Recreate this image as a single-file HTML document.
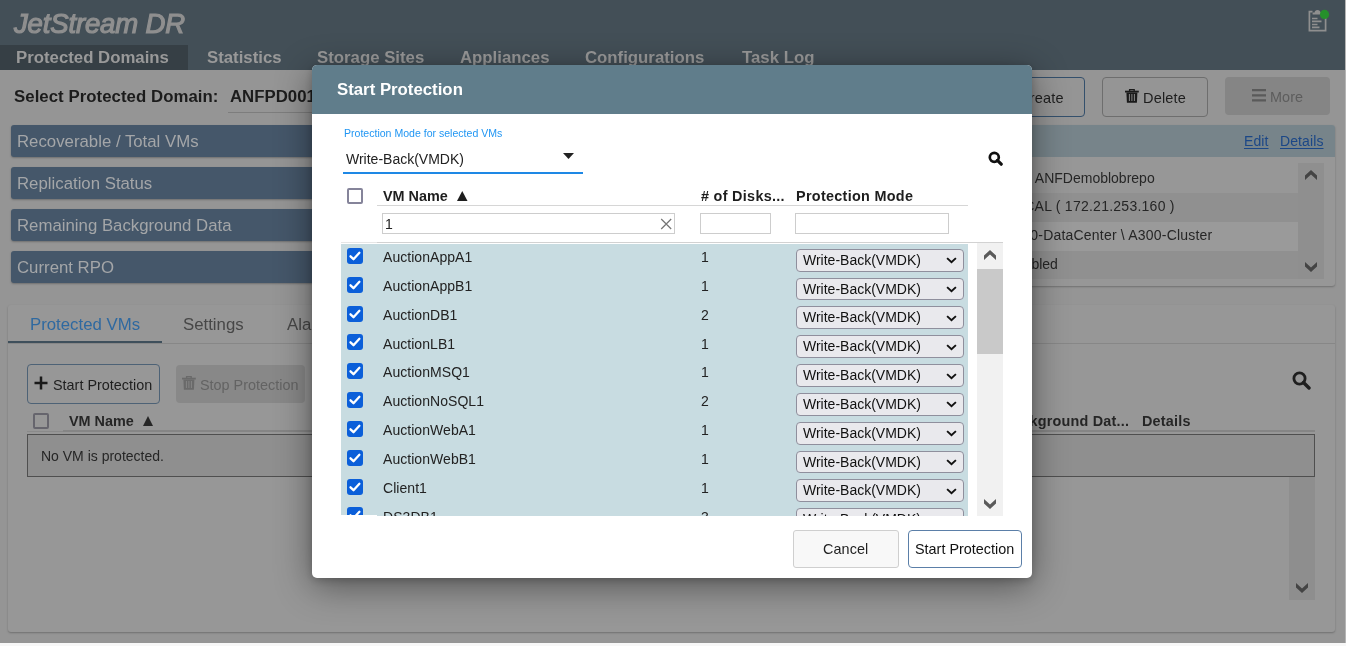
<!DOCTYPE html>
<html><head><meta charset="utf-8">
<style>
*{box-sizing:border-box;margin:0;padding:0}
html,body{width:1346px;height:646px;overflow:hidden;background:#f7f7f7;font-family:"Liberation Sans",sans-serif}
.a{position:absolute}
.t{position:absolute;white-space:nowrap;line-height:1;will-change:transform}
#page{position:absolute;left:0;top:0;width:1345px;height:643px;background:#959595;overflow:hidden}
#rstrip{position:absolute;left:1345px;top:0;width:1px;height:643px;background:#b5b5b5}
#hdr{left:0;top:0;width:1345px;height:70px;background:#434f57}
.nav{font-weight:bold;font-size:16.8px;color:#999}
.pnl{left:11px;width:650px;height:32px;background:#45576a;border-radius:3px;box-shadow:0 1px 2px rgba(0,0,0,.25)}
.pnl span{position:absolute;left:6px;top:9px;font-size:16.8px;color:#a4a6a8;line-height:1;white-space:nowrap;will-change:transform}
#modal{left:312px;top:65px;width:720px;height:513px;background:#fff;border-radius:5px;box-shadow:0 8px 36px rgba(0,0,0,.45), 0 2px 8px rgba(0,0,0,.2);overflow:hidden}
#mh{left:0;top:0;width:720px;height:49px;background:#607d8b}
.row{position:absolute;left:0;width:627px;height:28.8px}
.cb{position:absolute;left:6px;top:4px;width:16px;height:16px;background:#0b5fd9;border-radius:3px}
.cb svg{position:absolute;left:0;top:0}
.rn{position:absolute;left:42px;top:6.2px;font-size:14px;color:#222;line-height:1;white-space:nowrap;letter-spacing:0.05px}
.rd{position:absolute;left:360px;top:6.2px;font-size:14px;color:#222;line-height:1}
.sel{position:absolute;left:455px;top:4.8px;width:168px;height:22.8px;background:#e9e9ed;border:1px solid #8f8f9d;border-radius:4px}
.sel span{position:absolute;left:6px;top:3px;font-size:14px;color:#111;line-height:1;white-space:nowrap}
.sel svg{position:absolute;left:149px;top:7.6px}
.hb{font-size:14.4px;font-weight:bold;color:#1e1e1e;letter-spacing:0.25px}
</style></head><body>
<div id="page">
  <div id="hdr" class="a">
    <div class="t" style="left:14px;top:10px;font-size:27.5px;font-weight:normal;font-style:italic;color:#8f8f8f;-webkit-text-stroke:1.2px #8f8f8f;letter-spacing:-0.15px">JetStream DR</div>
    <div class="a" style="left:0;top:45px;width:188px;height:25px;background:#363f45"></div>
    <div class="t nav" style="left:16px;top:50px">Protected Domains</div>
    <div class="t nav" style="left:207px;top:50px">Statistics</div>
    <div class="t nav" style="left:317px;top:50px">Storage Sites</div>
    <div class="t nav" style="left:459.5px;top:50px">Appliances</div>
    <div class="t nav" style="left:585px;top:50px">Configurations</div>
    <div class="t nav" style="left:742px;top:50px">Task Log</div>
    <svg class="a" style="left:1306px;top:8px" width="24" height="26" viewBox="0 0 24 26">
      <path d="M6.5 3.6 H3.4 V22.6 H19.6 V3.6 H16.5" fill="none" stroke="#8f8f8f" stroke-width="1.7"/>
      <path d="M6.6 6.6 V4.6 H8.6 Q8.8 2 11.5 2 Q14.2 2 14.4 4.6 H16.4 V6.6 Z" fill="#8f8f8f"/>
      <path d="M6 10.5 H11.5 M6 13.4 H15.5 M6 16.5 H11.5 M6 19.4 H13.5" stroke="#8f8f8f" stroke-width="1.7"/>
      <circle cx="18.5" cy="6.4" r="4.6" fill="#26902b"/>
    </svg>
  </div>
  <div class="t" style="left:14px;top:89px;font-size:16.8px;font-weight:bold;color:#1c1c1c;letter-spacing:0.05px">Select Protected Domain:</div>
  <div class="t" style="left:229.5px;top:89px;font-size:16.8px;font-weight:bold;color:#1c1c1c">ANFPD001</div>
  <div class="a" style="left:228px;top:112px;width:90px;height:1px;background:#7d7d7d"></div>
  <div class="a pnl" style="top:125px"><span>Recoverable / Total VMs</span></div>
  <div class="a pnl" style="top:167px"><span>Replication Status</span></div>
  <div class="a pnl" style="top:209px"><span>Remaining Background Data</span></div>
  <div class="a pnl" style="top:251px"><span>Current RPO</span></div>

  <div class="a" style="left:985px;top:77px;width:100px;height:40px;border:1px solid #34506c;border-radius:4px"></div>
  <div class="t" style="left:1018.5px;top:91px;font-size:14.5px;color:#1e1e1e;letter-spacing:0.2px">Create</div>
  <div class="a" style="left:1102px;top:77px;width:106px;height:40px;border:1px solid #6e6e6e;border-radius:4px"></div>
  <div class="a" style="left:1125px;top:89px;line-height:0"><svg width="14" height="14" viewBox="0 0 14 14"><path d="M4.6 2 V0.7 H9.2 V2" stroke="#1a1a1a" stroke-width="1.3" fill="none"/><rect x="0" y="1.7" width="13.8" height="1.8" fill="#1a1a1a"/><path d="M1.4 3.4 H12.4 L11.9 13.8 H1.9 Z" fill="#1a1a1a"/><path d="M4.4 5 V12 M6.9 5 V12 M9.4 5 V12" stroke="#959595" stroke-width="0.9"/></svg></div>
  <div class="t" style="left:1143px;top:90.9px;font-size:14.5px;color:#1e1e1e;letter-spacing:0.2px">Delete</div>
  <div class="a" style="left:1225px;top:77px;width:105px;height:38px;background:#858585;border-radius:4px"></div>
  <svg class="a" style="left:1252px;top:89px" width="14" height="13" viewBox="0 0 14 13"><path d="M0 1.2 H14 M0 6.3 H14 M0 11.4 H14" stroke="#5a5a5a" stroke-width="2.2"/></svg>
  <div class="t" style="left:1269.5px;top:90.1px;font-size:14.4px;color:#5d5d5d;letter-spacing:0.1px">More</div>

  <div class="a" style="left:680px;top:125px;width:655px;height:161px;background:#979797;border-radius:3px;box-shadow:0 1px 2px rgba(0,0,0,.25);overflow:hidden">
    <div class="a" style="left:0;top:0;width:655px;height:32px;background:#77848a"></div>
    <div class="t" style="left:564px;top:9.1px;font-size:14px;color:#1b4787;text-decoration:underline;text-underline-offset:2px;letter-spacing:0.1px">Edit</div>
    <div class="t" style="left:599.5px;top:9.1px;font-size:14px;color:#1b4787;text-decoration:underline;text-underline-offset:2px;letter-spacing:0.1px">Details</div>
    <div class="a" style="left:0;top:38px;width:618px;height:30px;background:#979797"></div>
    <div class="a" style="left:0;top:68px;width:618px;height:29px;background:#909090"></div>
    <div class="a" style="left:0;top:97px;width:618px;height:29px;background:#9a9a9a"></div>
    <div class="a" style="left:0;top:126px;width:618px;height:28px;background:#909090"></div>
    <div class="a" style="left:618px;top:38px;width:26px;height:116px;background:#8f8f8f"></div>
    <div class="a" style="left:625px;top:45.2px;line-height:0"><svg width="12" height="10" viewBox="0 0 12 10"><path d="M0 5.5 L6 0 L12 5.5 L12 10 L6 4.5 L0 10 Z" fill="#444"/></svg></div>
    <div class="a" style="left:625px;top:136.9px;line-height:0"><svg width="12" height="10" viewBox="0 0 12 10"><path d="M0 0 L6 5.5 L12 0 L12 4.5 L6 10 L0 4.5 Z" fill="#444"/></svg></div>
    <div class="t" style="right:180px;top:46px;font-size:14px;color:#262626;text-align:right">Target Storage: ANFDemoblobrepo</div>
    <div class="t" style="right:160px;top:73.7px;font-size:14px;color:#262626;text-align:right;letter-spacing:0.25px">Appliance: LOCAL ( 172.21.253.160 )</div>
    <div class="t" style="right:122.9px;top:102.5px;font-size:14px;color:#262626;text-align:right;letter-spacing:0.2px">vCenter: A300-DataCenter \ A300-Cluster</div>
    <div class="t" style="right:277.4px;top:132px;font-size:14px;color:#262626;text-align:right">Status: Enabled</div>
  </div>

  <div class="a" style="left:8px;top:305px;width:1327px;height:327px;background:#979797;border-radius:3px;box-shadow:0 1px 2px rgba(0,0,0,.25)">
    <div class="a" style="left:0;top:38px;width:1327px;height:1px;background:#878787"></div>
    <div class="a" style="left:0;top:36px;width:154px;height:2px;background:#3e4f5b"></div>
    <div class="t" style="left:21.5px;top:12px;font-size:16.8px;color:#2f69a0">Protected VMs</div>
    <div class="t" style="left:175px;top:12px;font-size:16.8px;color:#474747">Settings</div>
    <div class="t" style="left:279px;top:12px;font-size:16.8px;color:#474747">Alarms</div>
    <div class="a" style="left:19px;top:59px;width:133px;height:40px;border:1px solid #4d6276;border-radius:4px"></div>
    <svg class="a" style="left:26px;top:71px" width="14" height="14" viewBox="0 0 14 14"><path d="M7 0.5 V13.5 M0.5 7 H13.5" stroke="#1a1a1a" stroke-width="2.5"/></svg>
    <div class="t" style="left:45px;top:73px;font-size:14.4px;color:#1e1e1e">Start Protection</div>
    <div class="a" style="left:168px;top:60px;width:129px;height:38px;background:#888;border-radius:4px"></div>
    <div class="a" style="left:174px;top:71px;line-height:0"><svg width="14" height="14" viewBox="0 0 14 14"><path d="M4.6 2 V0.7 H9.2 V2" stroke="#6a6a6a" stroke-width="1.3" fill="none"/><rect x="0" y="1.7" width="13.8" height="1.8" fill="#6a6a6a"/><path d="M1.4 3.4 H12.4 L11.9 13.8 H1.9 Z" fill="#6a6a6a"/><path d="M4.4 5 V12 M6.9 5 V12 M9.4 5 V12" stroke="#888" stroke-width="0.9"/></svg></div>
    <div class="t" style="left:192px;top:73px;font-size:14.4px;color:#636363">Stop Protection</div>
    <svg class="a" style="left:1284px;top:65.8px" width="19" height="19" viewBox="0 0 19 19"><circle cx="7.5" cy="7.5" r="5.6" stroke="#1f1f1f" stroke-width="2.8" fill="none"/><path d="M11.5 11.5 L17 17" stroke="#1f1f1f" stroke-width="3.4" stroke-linecap="round"/></svg>
    <div class="a" style="left:25px;top:108px;width:16px;height:16px;border:2px solid #66656d;border-radius:2px"></div>
    <div class="t hb" style="left:61px;top:108.5px;color:#262626;letter-spacing:0">VM Name</div>
    <svg class="a" style="left:135.2px;top:111px" width="10" height="10" viewBox="0 0 10 10"><path d="M5 0 L10 10 H0 Z" fill="#262626"/></svg>
    <div class="t hb" style="right:206px;top:109px;color:#262626;letter-spacing:0.2px;text-align:right">Remaining Background Dat...</div>
    <div class="t hb" style="left:1134px;top:109px;color:#262626;letter-spacing:0.2px">Details</div>
    <div class="a" style="left:19px;top:126px;width:36px;height:1px;background:#8a8a8a"></div><div class="a" style="left:55px;top:125px;width:1252px;height:2px;background:#858585"></div>
    <div class="a" style="left:19px;top:129px;width:1288px;height:43px;border:1px solid #4f4f4f;background:#8f8f8f"></div>
    <div class="t" style="left:32.5px;top:144px;font-size:14px;color:#262626">No VM is protected.</div>
    <div class="a" style="left:1281px;top:172px;width:26px;height:123px;background:#8e8e8e"></div>
    <div class="a" style="left:1288px;top:277.8px;line-height:0"><svg width="12" height="10" viewBox="0 0 12 10"><path d="M0 0 L6 5.5 L12 0 L12 4.5 L6 10 L0 4.5 Z" fill="#444"/></svg></div>
  </div>
</div>
<div id="rstrip"></div>

<div id="modal" class="a">
  <div id="mh" class="a">
    <div class="t" style="left:25px;top:17px;font-size:16.8px;font-weight:bold;color:#fff">Start Protection</div>
  </div>
  <div class="t" style="left:32px;top:62.7px;font-size:10.55px;color:#2196f3">Protection Mode for selected VMs</div>
  <div class="t" style="left:34px;top:86.5px;font-size:14px;color:#222">Write-Back(VMDK)</div>
  <svg class="a" style="left:251px;top:88px" width="11" height="6" viewBox="0 0 11 6"><path d="M0 0 L11 0 L5.5 6 Z" fill="#222"/></svg>
  <div class="a" style="left:31px;top:107px;width:240px;height:2px;background:#1e88e5"></div>
  <svg class="a" style="left:676px;top:85.8px" width="16" height="15" viewBox="0 0 16 15"><circle cx="6.3" cy="6.3" r="4.5" stroke="#111" stroke-width="2.7" fill="none"/><path d="M9.4 9.4 L13.2 13.2" stroke="#111" stroke-width="3.2" stroke-linecap="round"/></svg>
  <div class="a" style="left:35px;top:123px;width:16px;height:16px;border:2px solid #85849a;border-radius:2px"></div>
  <div class="t hb" style="left:71px;top:123.8px;letter-spacing:0">VM Name</div>
  <svg class="a" style="left:145px;top:126px" width="10.5" height="10" viewBox="0 0 10.5 10"><path d="M5.25 0 L10.5 10 H0 Z" fill="#1e1e1e"/></svg>
  <div class="t hb" style="left:388.5px;top:123.8px;letter-spacing:0.3px">#&nbsp;of Disks...</div>
  <div class="t hb" style="left:484px;top:123.8px;letter-spacing:0.3px">Protection Mode</div>
  <div class="a" style="left:65px;top:140px;width:591px;height:1px;background:#d6d6d6"></div>
  <div class="a" style="left:70px;top:148px;width:293px;height:21px;border:1px solid #cdcdcd;background:#fff"></div>
  <div class="t" style="left:73px;top:152px;font-size:14px;color:#222">1</div>
  <svg class="a" style="left:347.5px;top:153px" width="12" height="12" viewBox="0 0 12 12"><path d="M1.2 1 L11.2 11 M11.2 1 L1.2 11" stroke="#777" stroke-width="1.25"/></svg>
  <div class="a" style="left:388px;top:148px;width:71px;height:21px;border:1px solid #cdcdcd;background:#fff"></div>
  <div class="a" style="left:483px;top:148px;width:154px;height:21px;border:1px solid #cdcdcd;background:#fff"></div>
  <div class="a" style="left:29px;top:177px;width:36px;height:1px;background:#e6e6e6"></div>
  <div class="a" style="left:65px;top:177px;width:626px;height:1px;background:#d2d2d2"></div>
  <div class="a" style="left:29px;top:178px;width:662px;height:272.8px;overflow:hidden">
    <div class="a" style="left:0;top:1px;width:627px;height:272.5px;background:#c8dce1"></div>
<div class="row" style="top:1.0px"><div class="cb"><svg width="16" height="16" viewBox="0 0 16 16"><path d="M3.5 8.3 L6.5 11.2 L12.4 4.8" stroke="#fff" stroke-width="2.3" fill="none" stroke-linecap="round" stroke-linejoin="round"/></svg></div><div class="rn">AuctionAppA1</div><div class="rd">1</div><div class="sel"><span>Write-Back(VMDK)</span><svg width="11" height="7" viewBox="0 0 11 7"><path d="M1.1 1.1 L5.5 5.3 L9.9 1.1" stroke="#111" stroke-width="1.9" fill="none"/></svg></div></div>
<div class="row" style="top:29.82px"><div class="cb"><svg width="16" height="16" viewBox="0 0 16 16"><path d="M3.5 8.3 L6.5 11.2 L12.4 4.8" stroke="#fff" stroke-width="2.3" fill="none" stroke-linecap="round" stroke-linejoin="round"/></svg></div><div class="rn">AuctionAppB1</div><div class="rd">1</div><div class="sel"><span>Write-Back(VMDK)</span><svg width="11" height="7" viewBox="0 0 11 7"><path d="M1.1 1.1 L5.5 5.3 L9.9 1.1" stroke="#111" stroke-width="1.9" fill="none"/></svg></div></div>
<div class="row" style="top:58.64px"><div class="cb"><svg width="16" height="16" viewBox="0 0 16 16"><path d="M3.5 8.3 L6.5 11.2 L12.4 4.8" stroke="#fff" stroke-width="2.3" fill="none" stroke-linecap="round" stroke-linejoin="round"/></svg></div><div class="rn">AuctionDB1</div><div class="rd">2</div><div class="sel"><span>Write-Back(VMDK)</span><svg width="11" height="7" viewBox="0 0 11 7"><path d="M1.1 1.1 L5.5 5.3 L9.9 1.1" stroke="#111" stroke-width="1.9" fill="none"/></svg></div></div>
<div class="row" style="top:87.46px"><div class="cb"><svg width="16" height="16" viewBox="0 0 16 16"><path d="M3.5 8.3 L6.5 11.2 L12.4 4.8" stroke="#fff" stroke-width="2.3" fill="none" stroke-linecap="round" stroke-linejoin="round"/></svg></div><div class="rn">AuctionLB1</div><div class="rd">1</div><div class="sel"><span>Write-Back(VMDK)</span><svg width="11" height="7" viewBox="0 0 11 7"><path d="M1.1 1.1 L5.5 5.3 L9.9 1.1" stroke="#111" stroke-width="1.9" fill="none"/></svg></div></div>
<div class="row" style="top:116.28px"><div class="cb"><svg width="16" height="16" viewBox="0 0 16 16"><path d="M3.5 8.3 L6.5 11.2 L12.4 4.8" stroke="#fff" stroke-width="2.3" fill="none" stroke-linecap="round" stroke-linejoin="round"/></svg></div><div class="rn">AuctionMSQ1</div><div class="rd">1</div><div class="sel"><span>Write-Back(VMDK)</span><svg width="11" height="7" viewBox="0 0 11 7"><path d="M1.1 1.1 L5.5 5.3 L9.9 1.1" stroke="#111" stroke-width="1.9" fill="none"/></svg></div></div>
<div class="row" style="top:145.1px"><div class="cb"><svg width="16" height="16" viewBox="0 0 16 16"><path d="M3.5 8.3 L6.5 11.2 L12.4 4.8" stroke="#fff" stroke-width="2.3" fill="none" stroke-linecap="round" stroke-linejoin="round"/></svg></div><div class="rn">AuctionNoSQL1</div><div class="rd">2</div><div class="sel"><span>Write-Back(VMDK)</span><svg width="11" height="7" viewBox="0 0 11 7"><path d="M1.1 1.1 L5.5 5.3 L9.9 1.1" stroke="#111" stroke-width="1.9" fill="none"/></svg></div></div>
<div class="row" style="top:173.92px"><div class="cb"><svg width="16" height="16" viewBox="0 0 16 16"><path d="M3.5 8.3 L6.5 11.2 L12.4 4.8" stroke="#fff" stroke-width="2.3" fill="none" stroke-linecap="round" stroke-linejoin="round"/></svg></div><div class="rn">AuctionWebA1</div><div class="rd">1</div><div class="sel"><span>Write-Back(VMDK)</span><svg width="11" height="7" viewBox="0 0 11 7"><path d="M1.1 1.1 L5.5 5.3 L9.9 1.1" stroke="#111" stroke-width="1.9" fill="none"/></svg></div></div>
<div class="row" style="top:202.74px"><div class="cb"><svg width="16" height="16" viewBox="0 0 16 16"><path d="M3.5 8.3 L6.5 11.2 L12.4 4.8" stroke="#fff" stroke-width="2.3" fill="none" stroke-linecap="round" stroke-linejoin="round"/></svg></div><div class="rn">AuctionWebB1</div><div class="rd">1</div><div class="sel"><span>Write-Back(VMDK)</span><svg width="11" height="7" viewBox="0 0 11 7"><path d="M1.1 1.1 L5.5 5.3 L9.9 1.1" stroke="#111" stroke-width="1.9" fill="none"/></svg></div></div>
<div class="row" style="top:231.56px"><div class="cb"><svg width="16" height="16" viewBox="0 0 16 16"><path d="M3.5 8.3 L6.5 11.2 L12.4 4.8" stroke="#fff" stroke-width="2.3" fill="none" stroke-linecap="round" stroke-linejoin="round"/></svg></div><div class="rn">Client1</div><div class="rd">1</div><div class="sel"><span>Write-Back(VMDK)</span><svg width="11" height="7" viewBox="0 0 11 7"><path d="M1.1 1.1 L5.5 5.3 L9.9 1.1" stroke="#111" stroke-width="1.9" fill="none"/></svg></div></div>
<div class="row" style="top:260.38px"><div class="cb"><svg width="16" height="16" viewBox="0 0 16 16"><path d="M3.5 8.3 L6.5 11.2 L12.4 4.8" stroke="#fff" stroke-width="2.3" fill="none" stroke-linecap="round" stroke-linejoin="round"/></svg></div><div class="rn">DS3DB1</div><div class="rd">3</div><div class="sel"><span>Write-Back(VMDK)</span><svg width="11" height="7" viewBox="0 0 11 7"><path d="M1.1 1.1 L5.5 5.3 L9.9 1.1" stroke="#111" stroke-width="1.9" fill="none"/></svg></div></div>

    <div class="a" style="left:636px;top:0;width:26px;height:272.5px;background:#f1f1f1"></div>
    <div class="a" style="left:636px;top:26px;width:26px;height:84.5px;background:#c9c9c9"></div>
    <div class="a" style="left:642.8px;top:7px;line-height:0"><svg width="12" height="10" viewBox="0 0 12 10"><path d="M0 5.5 L6 0 L12 5.5 L12 10 L6 4.5 L0 10 Z" fill="#5a5a5a"/></svg></div>
    <div class="a" style="left:643px;top:255.6px;line-height:0"><svg width="12" height="10" viewBox="0 0 12 10"><path d="M0 0 L6 5.5 L12 0 L12 4.5 L6 10 L0 4.5 Z" fill="#5a5a5a"/></svg></div>
  </div>
  <div class="a" style="left:29px;top:449.6px;width:36px;height:2px;background:#fff"></div>
  <div class="a" style="left:481px;top:465px;width:106px;height:38px;background:#f8f8f8;border:1px solid #cfcfcf;border-radius:3px"></div>
  <div class="t" style="left:511px;top:476.7px;font-size:14.4px;color:#222;letter-spacing:0.1px">Cancel</div>
  <div class="a" style="left:596px;top:465px;width:114px;height:38px;background:#fff;border:1px solid #5b7fa8;border-radius:4px"></div>
  <div class="t" style="left:603px;top:476.7px;font-size:14.4px;color:#111">Start Protection</div>
</div>
</body></html>
